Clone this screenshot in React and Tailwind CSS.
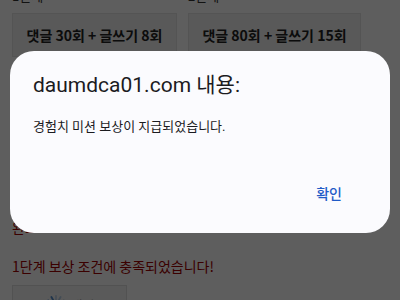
import React from "react";

export default function App() {
  return (
    <div className="relative w-[400px] h-[300px] overflow-hidden bg-white font-['Noto_Sans_CJK_KR',sans-serif]">
      {/* page behind the alert */}
      <div className="px-3 -mt-[14px]">
        <div className="flex gap-[11px]">
          <div className="w-[165px]">
            <div className="text-[13px] leading-[20px] text-[#333]">1단계</div>
            <div className="mt-[7px] h-[44px] border border-[#e4e4e4] bg-[#f0f0f0] flex items-center justify-center text-[14px] font-bold text-[#222]">
              댓글 30회 + 글쓰기 8회
            </div>
          </div>
          <div className="w-[173px]">
            <div className="text-[13px] leading-[20px] text-[#333]">2단계</div>
            <div className="mt-[7px] h-[44px] border border-[#e4e4e4] bg-[#f0f0f0] flex items-center justify-center text-[14px] font-bold text-[#222]">
              댓글 80회 + 글쓰기 15회
            </div>
          </div>
        </div>
        <div className="mt-[160px] text-[14px] leading-[20px] text-[#a00000]">완료</div>
        <div className="mt-[19px] text-[14px] leading-[20px] text-[#a00000]">
          1단계 보상 조건에 충족되었습니다!
        </div>
        <div className="mt-[9px] w-[115px] h-[40px] border border-[#ddd] bg-[#f5f5f5] flex items-center justify-center gap-1 text-[13px] text-[#999]">
          <svg width="22" height="22" viewBox="0 0 24 24" className="text-[#4a86c8]">
            {[0, 30, 60, 90, 120, 150, 180, 210, 240, 270, 300, 330].map((a, i) => (
              <rect key={a} x="11" y="1" width="2" height="6" rx="1" fill="currentColor" opacity={0.3 + (i / 12) * 0.7} transform={`rotate(${a} 12 12)`} />
            ))}
          </svg>
          <span>대기</span>
        </div>
      </div>

      {/* dim overlay */}
      <div className="absolute inset-0 bg-black/[0.63]" />

      {/* alert dialog */}
      <div className="absolute left-[10px] top-[51px] w-[380px] h-[182px] rounded-[24px] bg-[#fbfbfe] px-[23px] pt-[20px] font-['Roboto','Noto_Sans_CJK_KR',sans-serif]">
        <div className="text-[21px] leading-[28px] text-[#1b1b1f]">daumdca01.com 내용:</div>
        <div className="mt-[19px] text-[13px] leading-[18px] text-[#1b1b1f]">
          경험치 미션 보상이 지급되었습니다.
        </div>
        <div className="mt-[48px] flex justify-end pr-[25px]">
          <span className="text-[14px] font-medium text-[#1f5bc7]">확인</span>
        </div>
      </div>
    </div>
  );
}
